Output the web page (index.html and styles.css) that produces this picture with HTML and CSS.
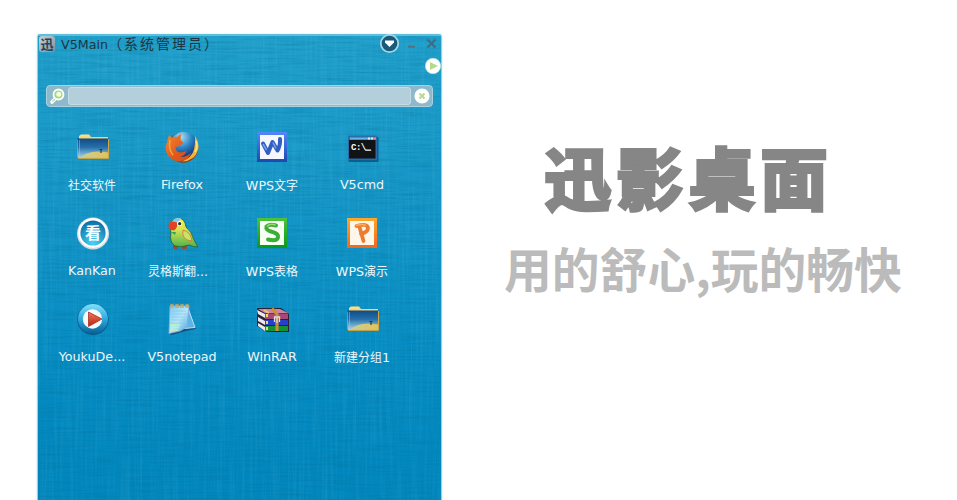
FILE: index.html
```
<!DOCTYPE html>
<html lang="zh-CN">
<head>
<meta charset="utf-8">
<title>迅影桌面</title>
<link rel="stylesheet" href="styles.css">
</head>
<body>
<svg class="defs" width="0" height="0" aria-hidden="true">
  <defs>
    <linearGradient id="sea" x1="0" y1="0" x2="0" y2="1"><stop offset="0" stop-color="#124a83"/><stop offset=".45" stop-color="#2670ab"/><stop offset="1" stop-color="#a9d8e8"/></linearGradient>
    <linearGradient id="gold" x1="0" y1="0" x2="0" y2="1"><stop offset="0" stop-color="#ffe48c"/><stop offset="1" stop-color="#dca83b"/></linearGradient>
    <linearGradient id="sand" x1="0" y1="0" x2="1" y2="0"><stop offset="0" stop-color="#c9cf98"/><stop offset="1" stop-color="#e2c258"/></linearGradient>
    <linearGradient id="blueframe" x1="0" y1="0" x2="0" y2="1"><stop offset="0" stop-color="#5387fb"/><stop offset="1" stop-color="#1c48b0"/></linearGradient>
    <linearGradient id="greenframe" x1="0" y1="0" x2="0" y2="1"><stop offset="0" stop-color="#4cc43c"/><stop offset="1" stop-color="#07991b"/></linearGradient>
    <linearGradient id="orangeframe" x1="0" y1="0" x2="0" y2="1"><stop offset="0" stop-color="#ffa72b"/><stop offset="1" stop-color="#f0681e"/></linearGradient>
    <linearGradient id="fox" x1="0" y1="0" x2="1" y2="1"><stop offset="0" stop-color="#f08a31"/><stop offset=".6" stop-color="#e0561d"/><stop offset="1" stop-color="#d0521b"/></linearGradient>
    <radialGradient id="globe" cx=".4" cy=".2" r=".8"><stop offset="0" stop-color="#a5e0f7"/><stop offset=".5" stop-color="#2c86c6"/><stop offset="1" stop-color="#152e74"/></radialGradient>
    <radialGradient id="orb" cx=".5" cy=".9" r=".9"><stop offset="0" stop-color="#48d3f4"/><stop offset="1" stop-color="#0b6ca4"/></radialGradient>
    <linearGradient id="ring" x1="0" y1="0" x2="0" y2="1"><stop offset="0" stop-color="#7fe0fb"/><stop offset=".5" stop-color="#2fa8dd"/><stop offset="1" stop-color="#075f94"/></linearGradient>
    <linearGradient id="red" x1="0" y1="0" x2="0" y2="1"><stop offset="0" stop-color="#f0765c"/><stop offset="1" stop-color="#b8240f"/></linearGradient>
    <linearGradient id="wing" x1="0" y1="0" x2="0" y2="1"><stop offset="0" stop-color="#f2ef4a"/><stop offset=".4" stop-color="#d5e456"/><stop offset="1" stop-color="#4db34a"/></linearGradient>
    <linearGradient id="note" x1="0" y1="0" x2="1" y2="1"><stop offset="0" stop-color="#79c9f3"/><stop offset=".5" stop-color="#b5e9fb"/><stop offset="1" stop-color="#3c9edb"/></linearGradient>
    <filter id="weave-h" x="0" y="0" width="100%" height="100%"><feTurbulence type="fractalNoise" baseFrequency="0.025 0.5" numOctaves="3" seed="4"/><feColorMatrix values="0 0 0 0 0  0 0 0 0 .15  0 0 0 0 .3  1.6 0 0 0 -.66"/></filter>
    <filter id="weave-v" x="0" y="0" width="100%" height="100%"><feTurbulence type="fractalNoise" baseFrequency="0.4 0.012" numOctaves="3" seed="9"/><feColorMatrix values="0 0 0 0 .3  0 0 0 0 .75  0 0 0 0 .95  1.6 0 0 0 -.7"/></filter>
    <symbol id="folder" viewBox="0 0 34 34">
      <path d="M4 9V6L6 4.500h8L16 7h17v9H4z" fill="url(#gold)"/>
      <path d="M2 8.500h32V28H3z" fill="url(#sea)"/>
      <path d="M5 28Q11 21.500 23 21.500q7 0 11 1.500v5z" fill="url(#sand)"/>
      <path d="M3 28.400h30.500V9" fill="none" stroke="#d2a63d"/>
      <path d="M2.500 9.500v18M4.500 10v16" stroke="#9fcbe2" stroke-width=".7" opacity=".7"/>
      <path d="M24.500 19.500h3m-1.500 0v3.500" stroke="#293c3e" stroke-width="1.200"/>
    </symbol>
  </defs>
</svg>
<main class="page">
  <section class="window">
    <svg class="weave" aria-hidden="true"><rect class="threads-h" width="100%" height="100%"/><rect class="threads-v" width="100%" height="100%"/></svg>
    <header class="titlebar">
      <span class="app-badge">迅</span>
      <h2 class="title">V5Main<span class="title-cjk">（系统管理员）</span></h2>
      <svg class="controls" width="60" height="20" viewBox="0 0 60 20">
        <circle cx="11.500" cy="9.500" r="8.700" fill="#1a5977" stroke="#a1d5e8" stroke-width="1.800"/>
        <path d="M7 6.500h9v2l-4.500 4.500L7 8.500z" fill="#fff"/>
        <path d="M30 12.700h7" stroke="#54727c" stroke-width="2"/>
        <path d="M49.500 5.500l8 8m0-8l-8 8" stroke="#426d7e" stroke-width="2.300"/>
      </svg>
    </header>
    <div class="expand">
      <svg width="16" height="16" viewBox="0 0 16 16"><circle cx="8" cy="8" r="7.700" fill="#fff" stroke="#c7e8ce" stroke-width=".6"/><path d="M5 4l8 4-8 4z" fill="#b7d98a"/></svg>
    </div>
    <div class="search">
      <svg class="lens" width="18" height="18" viewBox="0 0 18 18"><path d="M8 10l-5 5" stroke="#fff" stroke-width="3.600" stroke-linecap="round"/><path d="M7.500 10.500L3.500 14.500" stroke="#bad6a4" stroke-width="1.200"/><circle cx="9.500" cy="7.500" r="5" fill="#a4d87d" stroke="#fff" stroke-width="1.800"/><circle cx="9.800" cy="7.200" r="2.500" fill="#f0ffe6"/></svg>
      <span class="field"></span>
      <svg class="clear" width="16" height="16" viewBox="0 0 16 16"><circle cx="8" cy="8" r="7.600" fill="#fff"/><path d="M5.500 5.500l5 5m0-5l-5 5" stroke="#b7d98b" stroke-width="2"/></svg>
    </div>
    <ul class="apps">
      <li class="app"><svg class="icon"><use href="#folder"/></svg><span class="label cjk">社交软件</span></li>
      <li class="app">
        <svg class="icon" viewBox="0 0 34 34">
          <circle cx="18" cy="17.500" r="15.300" fill="#8a3d23"/><circle cx="18.500" cy="15" r="13.300" fill="url(#globe)"/>
          <path d="M30 6q5 7 3 14-3 11-16 11.500 10-4 12-12l1-6z" fill="#f5b336"/>
          <path d="M4 5l3 3q3-2 5-1l4-3-.5 6 3 3-4 3-4 1q0 5 5 5.500 4 0 6-2-1 5-6 6 6 1 11-4-3 8-12 9-13-1-14-14Q2.500 10 4 5z" fill="url(#fox)"/>
          <path d="M5 10q-2 9 3 15" stroke="#f7a23f" stroke-width="1.500" fill="none"/><path d="M31 11q2 6-1 11" stroke="#ffe477" stroke-width="1.600" fill="none"/>
        </svg><span class="label">Firefox</span></li>
      <li class="app">
        <svg class="icon" viewBox="0 0 34 34"><rect x="2" y="2" width="30" height="30" fill="url(#blueframe)"/><rect x="5" y="5" width="24" height="24" fill="#f5f8ff"/><path d="M8 13.500l5 9.500 4.500-11 5 8.500q3-5 2.500-11.500" fill="none" stroke="#315ec0" stroke-width="4" stroke-linejoin="round" stroke-linecap="round"/><path d="M8 14l3.500 6M18 12.500l3 6" stroke="#7ca3e6" stroke-width="1.500"/></svg>
        <span class="label">WPS<span class="cjk">文字</span></span></li>
      <li class="app">
        <svg class="icon" viewBox="0 0 34 34"><rect x="3.500" y="7" width="30" height="25" rx="1" fill="#0c5e8c"/><rect x="3" y="5.500" width="29" height="24.500" rx="1" fill="#2c6aa8"/><path d="M5 8.500h26" stroke="#64b4e9" stroke-width="2"/><path d="M23 8.500h2m1 0h2" stroke="#d3eeff" stroke-width="2"/><path d="M29 8.500h2" stroke="#ed806c" stroke-width="2"/><rect x="4" y="10" width="26.500" height="18.500" fill="#111314"/><text class="prompt" x="6" y="20">C:\_</text><path d="M20 20h6" stroke="#fff" stroke-width="1"/></svg>
        <span class="label">V5cmd</span></li>
      <li class="app">
        <svg class="icon" viewBox="0 0 34 34"><circle cx="18" cy="17.500" r="16" fill="#d5dce2"/><circle cx="18" cy="17" r="14.700" fill="#fff"/><circle cx="18" cy="17" r="12.600" fill="url(#orb)"/><text class="kan" x="18" y="23" text-anchor="middle">看</text></svg>
        <span class="label">KanKan</span></li>
      <li class="app">
        <svg class="icon" viewBox="0 0 34 34"><path d="M8 31h5m4 0h5" stroke="#a1462c" stroke-width="3.500"/><path d="M5 9Q7 2 14 2q6 1 7 9 6 5 8 13l4 7q-5 0-9-2-8 3-14 1-6-4-4-13z" fill="url(#wing)" stroke="#29602d" stroke-width=".8"/><path d="M7 6q2-5 9-4l-3 5z" fill="#7fc9ee"/><path d="M8 5.500q-6 0-4 8l5 1q4-3 3-8z" fill="#e54124"/><circle cx="14.500" cy="7.500" r="2.500" fill="#fff"/><circle cx="14.700" cy="7.700" r="1.600" fill="#25302c"/><path d="M18 14q-2 10 9 11-1-9-9-11z" fill="#c9e268" stroke="#e57142" stroke-width=".9"/><path d="M6 16l4 3 1-3z" fill="#37a64b"/></svg>
        <span class="label wide"><span class="cjk">灵格斯翻</span>...</span></li>
      <li class="app">
        <svg class="icon" viewBox="0 0 34 34"><rect x="2" y="2" width="30" height="30" fill="url(#greenframe)"/><rect x="5" y="5" width="24" height="24" fill="#f7fff4"/><path d="M21 9.500q-7-2-9.500 1-1 3.500 4.500 5 8 2 7 6-1 4-10 2" fill="none" stroke="#3cae37" stroke-width="4" stroke-linecap="round"/><path d="M20.500 9q-6-2-8.500 1.500" fill="none" stroke="#9bda71" stroke-width="1.500"/></svg>
        <span class="label">WPS<span class="cjk">表格</span></span></li>
      <li class="app">
        <svg class="icon" viewBox="0 0 34 34"><rect x="2" y="2" width="30" height="30" fill="url(#orangeframe)"/><rect x="5" y="5" width="24" height="24" fill="#fff6ea"/><path d="M11.500 10q11-3 11.500 2 0 4-7 6M14.500 11l4 14" fill="none" stroke="#ed7c2e" stroke-width="3.800" stroke-linecap="round"/><path d="M11 9.500q7-2 10 0" fill="none" stroke="#f9b060" stroke-width="1.500"/></svg>
        <span class="label">WPS<span class="cjk">演示</span></span></li>
      <li class="app">
        <svg class="icon" viewBox="0 0 34 34"><circle cx="18" cy="17.500" r="15.700" fill="#086090"/><circle cx="18" cy="17" r="15" fill="url(#ring)"/><circle cx="17.500" cy="17" r="9.700" fill="#f3fbff"/><path d="M13.500 10L27 17l-13.500 7.500z" fill="url(#red)" stroke="#ac2f20" stroke-width=".8" stroke-linejoin="round"/></svg>
        <span class="label">YoukuDe...</span></li>
      <li class="app">
        <svg class="icon" viewBox="0 0 34 34"><path d="M23 8l8 19-10 2-14 4-3-1z" fill="#15537f"/><path d="M23 6l7 19.500-11 1z" fill="#5eb4e4" stroke="#b8e4fa"/><path d="M5 4h19l-2 21-7 4-11 2.500z" fill="url(#note)" stroke="#9ca4e0" stroke-width=".8"/><path d="M7 9h14M7 12h14M6 15h14M6 18h14M5 21h15" stroke="#8fc6e5" stroke-width=".8"/><path d="M5 23h10m-10 2.500h9m-9 2.500h8" stroke="#b9f3b5" stroke-width="1.500"/><path d="M6 6V3h2v3m3 0V3h2v3m3 0V3h2v3m3 0V3h2v3" fill="none" stroke="#c9a95c" stroke-width="1.400"/></svg>
        <span class="label">V5notepad</span></li>
      <li class="app">
        <svg class="icon" viewBox="0 0 34 34"><path d="M2 6h24l8 6v18h-22L2 24z" fill="#2b2036"/><path d="M3 7h22l8 4H10z" fill="#c986a9"/><path d="M2 8l8 4v4l-7-4zm1 7l7 4v4l-7-4zm0 6l7 4v4l-7-5z" fill="#ece8ef"/><path d="M10 11.500h23V17H10z" fill="#a54874"/><path d="M10 18h23v5H10z" fill="#2540c9"/><path d="M10 24h23v5H10z" fill="#159132"/><path d="M12 12v3m0 4v3m0 3v3" stroke="#efd96b" stroke-width="2"/><path d="M17 6.500l5 5.500v17" fill="none" stroke="#ce8b36" stroke-width="3.200"/><path d="M9 8l5 3" stroke="#eac66a" stroke-width="2"/><path d="M19.500 20v-5h5v5m-2.500-4v5" fill="none" stroke="#ddd" stroke-width="1.300"/></svg>
        <span class="label">WinRAR</span></li>
      <li class="app"><svg class="icon"><use href="#folder"/></svg><span class="label"><span class="cjk">新建分组</span>1</span></li>
    </ul>
  </section>
  <section class="slogan">
    <h1 class="brand">迅影桌面</h1>
    <p class="tagline">用的舒心,玩的畅快</p>
  </section>
</main>
</body>
</html>
```
FILE: styles.css
```
* { box-sizing: border-box; }
body { margin: 0; background: #fff; overflow: hidden; font-family: "DejaVu Sans", "Noto Sans CJK SC", sans-serif; }
.defs { position: absolute; }
.page { display: flex; height: 500px; padding: 34px 0 0 37px; }
.window {
  position: relative;
  width: 405px;
  height: 480px;
  border: 1px solid #8dd2e8;
  border-top: 2px solid #60bedb;
  border-radius: 3px 3px 0 0;
  background: linear-gradient(#21a0cb, #1797c7 30%, #078dc3 65%, #0287bd 90%);
  box-shadow: 0 0 2px #bde1ec;
}
.weave { position: absolute; inset: 0; width: 100%; height: 100%; }
.threads-h { filter: url(#weave-h); opacity: .4; }
.threads-v { filter: url(#weave-v); opacity: .13; }
.titlebar, .expand, .search, .apps { position: relative; }
.titlebar { display: flex; align-items: center; height: 20px; margin-top: -2px; padding: 0 3px 0 1px; }
.app-badge {
  width: 16px;
  height: 16px;
  border-radius: 3px;
  background: linear-gradient(135deg, #c5d0d7, #82939d);
  color: #25435a;
  font: 700 13px/15px "Noto Sans CJK SC", sans-serif;
  text-align: center;
}
.title { flex: 1; margin: 0 0 0 6px; color: #1d3540; font-size: 12.7px; font-weight: 400; line-height: 18px; white-space: nowrap; }
.title-cjk { font-family: "Noto Sans CJK SC", sans-serif; font-size: 14px; letter-spacing: 2px; }
.controls { display: block; }
.expand { display: flex; justify-content: flex-end; height: 16px; margin-top: 4px; }
.search {
  display: flex;
  align-items: center;
  height: 22px;
  margin: 11px 8px 0;
  padding: 0 2px;
  border: 1px solid #aad1df;
  border-radius: 4px;
  background: #8db9cb;
}
.field { flex: 1; height: 18px; margin: 0 3px 0 1px; border: 1px solid #c5dce4; border-radius: 3px; background: #b3cfdc; }
.apps { display: grid; grid-template-columns: repeat(4, 90px); grid-auto-rows: 86px; margin: 23px 0 0 9px; padding: 0; list-style: none; }
.app { display: flex; flex-direction: column; align-items: center; }
.icon { width: 34px; height: 34px; }
.label { margin-top: 13px; color: #edf6fa; font-size: 12.7px; line-height: 16px; white-space: nowrap; }
.cjk { font-family: "Noto Sans CJK SC", sans-serif; font-size: 12px; line-height: 16px; }
.wide { margin-right: 8px; }
.prompt { fill: #fff; font: 700 9px "Liberation Mono", monospace; letter-spacing: -.5px; }
.kan { fill: #fff; font: 700 16px "Noto Sans CJK SC", sans-serif; }
.slogan { margin: 90px 0 0 62px; font-family: "Noto Sans CJK SC", sans-serif; white-space: nowrap; }
.brand { margin: 0 0 0 40px; color: #868686; font-size: 68px; font-weight: 900; letter-spacing: 4px; line-height: 104px; -webkit-text-stroke: 2px #868686; }
.tagline { margin: 4px 0 0; color: #bbb; font-size: 47.8px; font-weight: 700; line-height: 72px; }
```
